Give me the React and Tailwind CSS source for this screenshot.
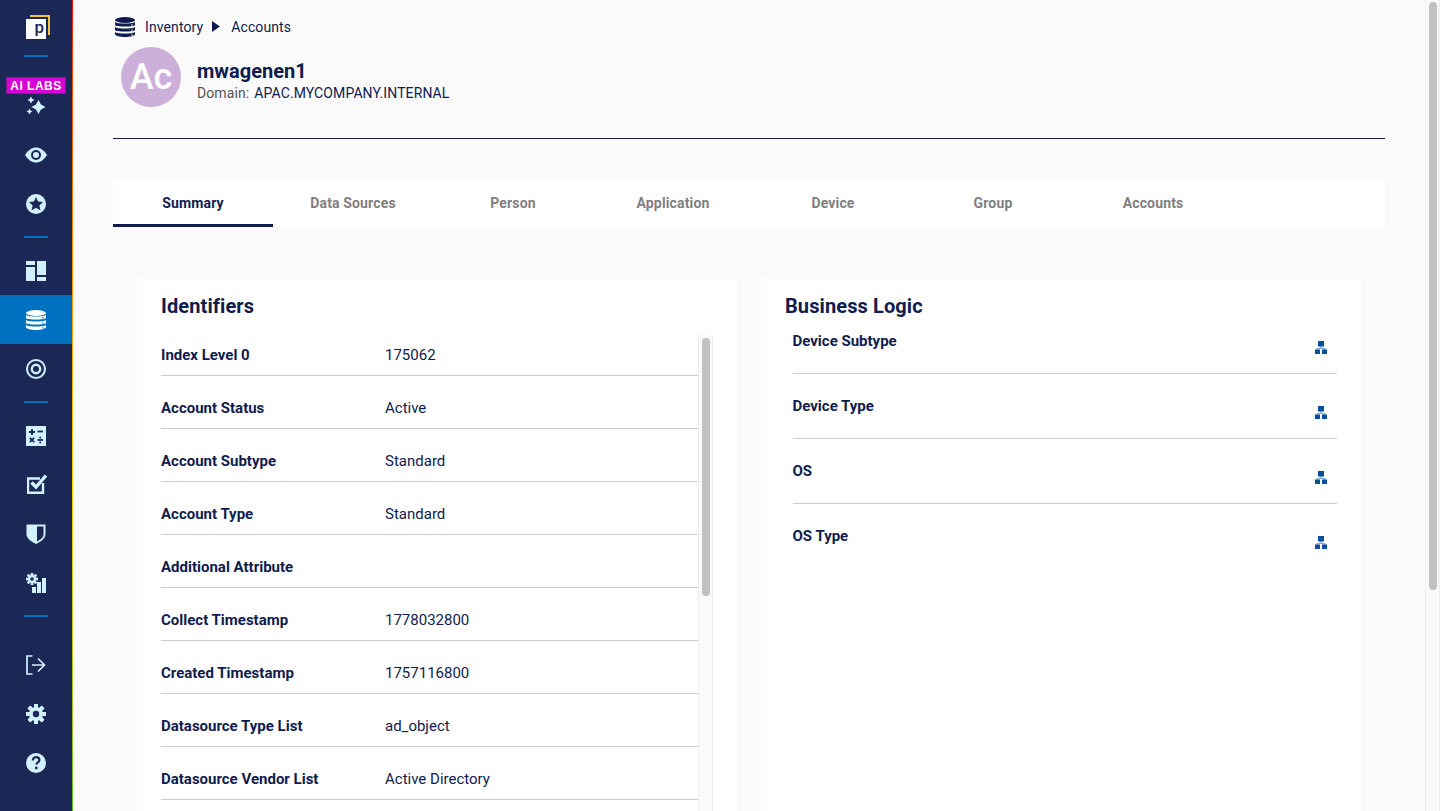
const SideIcon = ({ children, active }) => (
  <div className={`w-full h-[49px] shrink-0 flex items-center justify-center text-[#d2f1ff] ${active ? "bg-[#0070c0] text-white" : ""}`}>
    {children}
  </div>
);

const Divider = () => <div className="w-6 h-[2px] bg-[#0070c0] my-2 shrink-0" />;

const teeth = [0, 45, 90, 135, 180, 225, 270, 315];

const Sparkles = () => (
  <svg width="20" height="20" viewBox="0 0 20 20" fill="currentColor">
    <path d="M12.5 4 L15 8.5 L19.5 11 L15 13.5 L12.5 18 L10 13.5 L5.5 11 L10 8.5 Z" />
    <path d="M5 0.5 L6.2 2.8 L8.5 4 L6.2 5.2 L5 7.5 L3.8 5.2 L1.5 4 L3.8 2.8 Z" />
    <path d="M3.5 12.5 L4.5 14.5 L6.5 15.5 L4.5 16.5 L3.5 18.5 L2.5 16.5 L0.5 15.5 L2.5 14.5 Z" />
  </svg>
);

const Eye = () => (
  <svg width="22" height="16" viewBox="0 0 22 16">
    <path d="M0 8 C3 3 7 0.5 11 0.5 C15 0.5 19 3 22 8 C19 13 15 15.5 11 15.5 C7 15.5 3 13 0 8 Z" fill="currentColor" />
    <circle cx="11" cy="8" r="5" fill="#1b2754" />
    <circle cx="11" cy="8" r="3" fill="currentColor" />
  </svg>
);

const StarCircle = () => (
  <svg width="20" height="20" viewBox="0 0 20 20">
    <circle cx="10" cy="10" r="10" fill="currentColor" />
    <path d="M10 3 L12.1 7.5 L17 8.1 L13.4 11.4 L14.4 16.2 L10 13.8 L5.6 16.2 L6.6 11.4 L3 8.1 L7.9 7.5 Z" fill="#1b2754" />
  </svg>
);

const Panels = () => (
  <svg width="20" height="20" viewBox="0 0 20 20" fill="currentColor">
    <rect x="0" y="0" width="9" height="4" />
    <rect x="0" y="6" width="9" height="14" />
    <rect x="11" y="0" width="9" height="14" />
    <rect x="11" y="16" width="9" height="4" />
  </svg>
);

const Database = ({ color = "#0070c0", size = 20 }) => (
  <svg width={size} height={size} viewBox="0 0 20 20">
    <ellipse cx="10" cy="3" rx="10" ry="3" fill="currentColor" />
    <path d="M0 5 C2 7 18 7 20 5 V8 C20 10 0 10 0 8 Z" fill="currentColor" />
    <path d="M0 10 C2 12 18 12 20 10 V13 C20 15 0 15 0 13 Z" fill="currentColor" />
    <path d="M0 15 C2 17 18 17 20 15 V17 C20 21 0 21 0 17 Z" fill="currentColor" />
    <circle cx="17" cy="8" r="0.8" fill={color} />
    <circle cx="17" cy="13" r="0.8" fill={color} />
    <circle cx="17" cy="18" r="0.8" fill={color} />
  </svg>
);

const Target = () => (
  <svg width="20" height="20" viewBox="0 0 20 20" fill="none" stroke="currentColor">
    <circle cx="10" cy="10" r="9" strokeWidth="2" />
    <circle cx="10" cy="10" r="4.2" strokeWidth="2.4" />
  </svg>
);

const Calculator = () => (
  <svg width="20" height="20" viewBox="0 0 20 20">
    <rect width="20" height="20" fill="currentColor" />
    <g stroke="#1b2754" strokeWidth="1.8">
      <path d="M3 6 H9 M6 3 V9" />
      <path d="M11.5 5.5 H17" />
      <path d="M3.8 11.8 L8.2 16.2 M8.2 11.8 L3.8 16.2" />
      <path d="M11.5 14 H17" />
    </g>
    <circle cx="14.2" cy="11.6" r="1" fill="#1b2754" />
    <circle cx="14.2" cy="16.4" r="1" fill="#1b2754" />
  </svg>
);

const CheckBox = () => (
  <svg width="21" height="20" viewBox="0 0 21 20" fill="none" stroke="currentColor" className="ml-[3px] mb-[2px]">
    <path d="M16 9 V18.8 H1 V4.5 H13" strokeWidth="2.4" />
    <path d="M4.5 8.5 L9 13 L19 1.5" strokeWidth="3.4" />
  </svg>
);

const Shield = () => (
  <svg width="20" height="20" viewBox="0 0 20 20">
    <path d="M0.5 0.5 H19.5 V10 C19.5 14.5 15 17.5 10 20 C5 17.5 0.5 14.5 0.5 10 Z" fill="currentColor" />
    <path d="M11 2.5 H17.5 V10 C17.5 13.5 14.5 15.7 11 17.6 Z" fill="#1b2754" />
  </svg>
);

const GearBars = () => (
  <svg width="20" height="20" viewBox="0 0 20 20">
    <g fill="currentColor">
      {teeth.map((a) => (
        <rect key={a} x="4.8" y="0" width="2.4" height="12" transform={`rotate(${a} 6 6)`} />
      ))}
    </g>
    <circle cx="6" cy="6" r="3.8" fill="currentColor" />
    <circle cx="6" cy="6" r="1.8" fill="#1b2754" />
    <rect x="6" y="14" width="4" height="6" fill="currentColor" />
    <rect x="11" y="9" width="4" height="11" fill="currentColor" />
    <rect x="16" y="5" width="4" height="15" fill="currentColor" />
  </svg>
);

const Logout = () => (
  <svg width="20" height="20" viewBox="0 0 20 20" fill="none" stroke="currentColor" strokeWidth="1.7">
    <path d="M6.5 1 H1 V19 H6.5" />
    <path d="M6 10 H18.5 M12 3.5 L18.5 10 L12 16.5" />
  </svg>
);

const Gear = () => (
  <svg width="20" height="20" viewBox="0 0 20 20">
    <g fill="currentColor">
      {teeth.map((a) => (
        <rect key={a} x="8" y="0" width="4" height="20" rx="0.6" transform={`rotate(${a} 10 10)`} />
      ))}
    </g>
    <circle cx="10" cy="10" r="7" fill="currentColor" />
    <circle cx="10" cy="10" r="3.2" fill="#1b2754" />
  </svg>
);

const Help = () => (
  <svg width="20" height="20" viewBox="0 0 20 20">
    <circle cx="10" cy="10" r="10" fill="currentColor" />
    <path d="M6.8 7.4 C6.8 5.3 8.3 4.2 10.1 4.2 C12 4.2 13.4 5.4 13.4 7.1 C13.4 9.4 10.4 9.4 10.4 11.6" fill="none" stroke="#1b2754" strokeWidth="2.2" />
    <circle cx="10.3" cy="15" r="1.4" fill="#1b2754" />
  </svg>
);

const Hierarchy = () => (
  <svg width="12" height="13" viewBox="0 0 12 13">
    <path d="M6 5 V7.5 M2.2 9 V7.5 H9.8 V9" fill="none" stroke="#7da7d6" strokeWidth="1.2" />
    <rect x="3" y="0" width="6" height="5.5" fill="#0a4f9e" />
    <rect x="0" y="8.5" width="5" height="4.5" fill="#0a4f9e" />
    <rect x="7" y="8.5" width="5" height="4.5" fill="#0a4f9e" />
  </svg>
);

const Sidebar = () => (
  <div className="relative w-[72px] h-full shrink-0 bg-[#1b2754] flex flex-col items-center">
    <div className="h-[55px] w-full shrink-0 flex items-center justify-center">
      <div className="relative w-5 h-5 mt-[3px]">
        <div className="absolute -top-1 left-1 w-5 h-5 border-t-2 border-r-2 border-[#f0c33c]" />
        <div className="absolute inset-0 bg-white flex items-center justify-end pr-[2px]">
          <span className="text-[#1b2754] text-[17px] leading-none font-medium pb-[3px]">p</span>
        </div>
      </div>
    </div>
    <div className="w-6 h-[2px] bg-[#0070c0] shrink-0" />
    <div className="mt-6" />
    <div className="absolute left-[6px] top-[77px] w-[60px] h-[17px] bg-[#d400d4] border border-[#8a1a9a] flex items-center justify-center text-white text-[12px] font-bold tracking-[0.5px] font-['Liberation_Sans',sans-serif]">
      AI LABS
    </div>
    <SideIcon><Sparkles /></SideIcon>
    <SideIcon><Eye /></SideIcon>
    <SideIcon><StarCircle /></SideIcon>
    <Divider />
    <SideIcon><Panels /></SideIcon>
    <SideIcon active><Database /></SideIcon>
    <SideIcon><Target /></SideIcon>
    <Divider />
    <SideIcon><Calculator /></SideIcon>
    <SideIcon><CheckBox /></SideIcon>
    <SideIcon><Shield /></SideIcon>
    <SideIcon><GearBars /></SideIcon>
    <Divider />
    <div className="mt-[15px]" />
    <SideIcon><Logout /></SideIcon>
    <SideIcon><Gear /></SideIcon>
    <SideIcon><Help /></SideIcon>
  </div>
);

const tabs = ["Summary", "Data Sources", "Person", "Application", "Device", "Group", "Accounts"];

const identifiers = [
  ["Index Level 0", "175062"],
  ["Account Status", "Active"],
  ["Account Subtype", "Standard"],
  ["Account Type", "Standard"],
  ["Additional Attribute", ""],
  ["Collect Timestamp", "1778032800"],
  ["Created Timestamp", "1757116800"],
  ["Datasource Type List", "ad_object"],
  ["Datasource Vendor List", "Active Directory"],
];

const logic = ["Device Subtype", "Device Type", "OS", "OS Type"];

export default function App() {
  return (
    <div className="h-[811px] w-full flex overflow-hidden bg-[#fafafa] text-[#101c4e] font-['Roboto',sans-serif]">
      <Sidebar />
      <div className="w-px h-full shrink-0 bg-linear-to-b from-[#ff0000] via-[#ffd000] via-60% to-[#5fc21e]" />

      <div className="flex-1 min-w-0 px-10 overflow-hidden">
        {/* header */}
        <div className="h-[47px] pt-[6px] flex items-center text-sm tracking-[0.1px]">
          <div className="ml-[2px] text-[#101c4e]"><Database color="#fafafa" /></div>
          <span className="ml-[10px]">Inventory</span>
          <svg width="8" height="11" viewBox="0 0 8 11" className="ml-[9px]"><path d="M0 0 L8 5.5 L0 11 Z" fill="#101c4e" /></svg>
          <span className="ml-[11px]">Accounts</span>
        </div>
        <div className="flex items-center pl-2 h-[60px]">
          <div className="w-[60px] h-[60px] rounded-full bg-[#cdb0da] flex items-center justify-center text-white text-[36px] font-medium">Ac</div>
          <div className="ml-4 mt-2">
            <div className="text-[20px] font-bold leading-6">mwagenen1</div>
            <div className="text-sm leading-5 tracking-[0.1px]">
              <span className="text-[#555555]">Domain:</span>
              <span className="ml-[5px]">APAC.MYCOMPANY.INTERNAL</span>
            </div>
          </div>
        </div>
        <div className="mt-[31px] h-px bg-[#101c4e]" />

        {/* tabs */}
        <div className="mt-10 h-12 bg-white flex">
          {tabs.map((t, i) => (
            <div key={t} className={`w-40 flex items-center justify-center text-sm font-bold tracking-[0.15px] ${i === 0 ? "border-b-[3px] border-[#101c4e] pt-[3px]" : "text-[#808080]"}`}>
              {t}
            </div>
          ))}
        </div>

        {/* cards */}
        <div className="mt-[52px] px-6 grid grid-cols-2 gap-6">
          <div className="bg-white px-6 pt-[15px] h-[600px]">
            <h2 className="text-xl font-bold leading-6 tracking-[0.1px]">Identifiers</h2>
            <div className="mt-[17px] flex">
              <div className="w-[537px] shrink-0">
                {identifiers.map(([k, v], i) => (
                  <div key={k} className={`flex items-end pb-[10px] border-b border-[#cccccc] text-[15px] leading-5 ${i === 0 ? "h-[41px]" : "h-[53px]"}`}>
                    <div className="w-56 font-bold">{k}</div>
                    <div>{v}</div>
                  </div>
                ))}
              </div>
              <div className="w-[15px] h-[600px] border-x border-[#ececec] bg-[#fafafa] pt-[3px] flex justify-center">
                <div className="w-2 h-[258px] rounded-full bg-[#c1c1c1]" />
              </div>
            </div>
          </div>
          <div className="bg-white px-6 pt-[15px] h-[600px]">
            <h2 className="text-xl font-bold leading-6 tracking-[0.1px]">Business Logic</h2>
            <div className="pl-[7.5px] -mt-[9px] flex flex-col">
              {logic.map((k) => (
                <div key={k} className="h-[65px] pt-[22px] flex justify-between border-b border-[#cccccc] last:border-b-0 text-[15px] font-bold">
                  <span className="leading-5">{k}</span>
                  <div className="pr-[10px] pt-[10px]"><Hierarchy /></div>
                </div>
              ))}
            </div>
          </div>
        </div>
      </div>

      {/* page scrollbar */}
      <div className="w-[15px] h-full shrink-0 border-x border-[#ececec] bg-[#fafafa] pt-[2px] pl-[3px]">
        <div className="w-2 h-[588px] rounded-full bg-[#c1c1c1]" />
      </div>
    </div>
  );
}
